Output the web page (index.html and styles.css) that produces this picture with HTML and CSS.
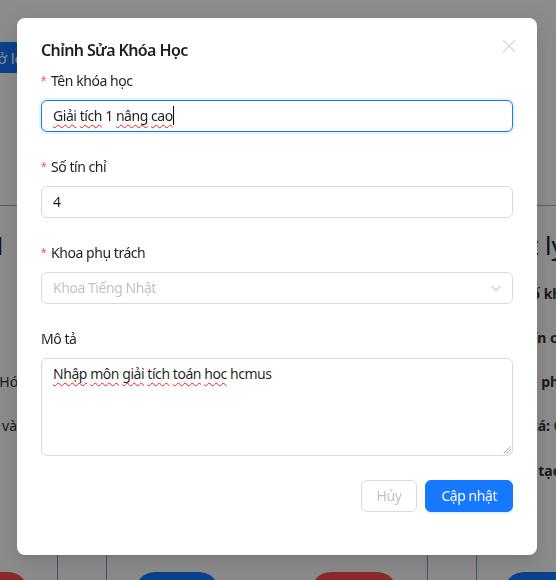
FILE: index.html
```html
<!DOCTYPE html>
<html lang="vi">
<head>
<meta charset="utf-8">
<title>Chỉnh Sửa Khóa Học</title>
<link rel="stylesheet" href="styles.css">
</head>
<body>
<div class="page">
  <div class="topbar"><button class="back-btn">Mở lớp học</button></div>
  <div class="divider"></div>
  <div class="cards">
    <div class="card card-left">
      <div class="card-title t-left">Giải tích 1</div>
      <div class="row r-hide">Mã khóa: GT001</div>
      <div class="row r-hide">Tín chỉ: 4</div>
      <div class="row r-hoa">Khoa: Khoa Hóa</div>
      <div class="row r-va">Cơ sở lý thuyết và</div>
      <div class="row r-hide">Ngày tạo: 01/09</div>
    </div>
    <div class="card card-right">
      <div class="card-title t-right">Vật lý đại cương</div>
      <div class="row b r1">Mã số khóa: VL101</div>
      <div class="row b r2">Tín chỉ: 3</div>
      <div class="row b r3">Khoa phụ trách: Vật lý</div>
      <div class="row r4"><b>Mô tá:</b> <span class="serif">Cơ học</span></div>
      <div class="row b r5">Ngày tạo: 02/09</div>
    </div>
  </div>
  <div class="actions">
    <div class="cell c1"><span class="pill red p1"></span></div>
    <div class="cell c2"></div>
    <div class="cell c3"><span class="pill blue p2"></span><span class="pill red p3"></span></div>
    <div class="cell c4"></div>
    <div class="cell c5"><span class="pill blue p4"></span></div>
  </div>
</div>

<div class="mask"></div>

<div class="modal" role="dialog">
  <button class="close" aria-label="Close">
    <svg width="14" height="14" viewBox="0 0 14 14"><path d="M1 1 L13 13 M13 1 L1 13" stroke="currentColor" stroke-width="1.3" fill="none"/></svg>
  </button>
  <div class="modal-title">Chỉnh Sửa Khóa Học</div>
  <form class="form">
    <div class="item">
      <label class="label"><span class="req">*</span>Tên khóa học</label>
      <div class="input focused"><span class="sp">Giải</span> <span class="sp">tích</span> 1 <span class="sp">nâng</span> <span class="sp">cao</span><span class="caret"></span></div>
    </div>
    <div class="item">
      <label class="label"><span class="req">*</span>Số tín chỉ</label>
      <div class="input">4</div>
    </div>
    <div class="item">
      <label class="label"><span class="req">*</span>Khoa phụ trách</label>
      <div class="input select"><span class="muted">Khoa Tiếng Nhật</span>
        <svg class="arrow" width="10" height="7" viewBox="0 0 10 7"><path d="M0.6 0.8 L5 5.4 L9.4 0.8" stroke="currentColor" stroke-width="1.1" fill="none"/></svg>
      </div>
    </div>
    <div class="item">
      <label class="label">Mô tả</label>
      <div class="input textarea"><span class="sp">Nhập</span> <span class="sp">môn</span> <span class="sp">giải</span> <span class="sp">tích</span> <span class="sp">toán</span> <span class="sp">hoc</span> hcmus
        <svg class="grip" width="9" height="9" viewBox="0 0 9 9"><path d="M8.5 1.5 L1.5 8.5 M8.5 4.5 L4.5 8.5 M8.5 7 L7 8.5" stroke="#6b6b6b" stroke-width="0.9" stroke-dasharray="1 0.6" fill="none"/></svg>
      </div>
    </div>
    <div class="item footer">
      <button type="button" class="btn btn-disabled">Hủy</button>
      <button type="button" class="btn btn-primary">Cập nhật</button>
    </div>
  </form>
</div>
</body>
</html>
```

FILE: styles.css
```css
* { box-sizing: border-box; }
html, body { margin: 0; padding: 0; }
body {
  width: 556px;
  height: 580px;
  overflow: hidden;
  background: #fff;
  font-family: "Noto Sans", "Segoe UI", sans-serif;
  position: relative;
}

/* ---------- background page ---------- */
.page { height: 580px; display: flex; flex-direction: column; overflow: hidden; }
.topbar { flex: none; padding-top: 42px; height: 73px; display: flex; }
.back-btn {
  margin-left: -31px;
  height: 31px;
  border: 0;
  border-radius: 6px;
  background: #1677ff;
  color: #fff;
  font: 15px "Noto Sans", sans-serif;
  padding: 0 15px;
  white-space: nowrap;
}
.divider { flex: none; margin-top: 132px; border-top: 1px solid #7fb4c8; }
.cards { flex: none; height: 349px; display: flex; justify-content: space-between; }
.card { display: flex; flex-direction: column; white-space: nowrap; }
.card-left { width: 300px; margin-left: -260px; align-items: flex-end; }
.card-right { width: 260px; margin-right: -204px; align-items: flex-start; }
.card-title {
  margin-top: 23px;
  font-size: 25px;
  line-height: 32px;
  font-weight: 400;
  color: #14233c;
}
.row { font-size: 14px; line-height: 22px; color: #333; margin-top: 22px; }
.card-left .row:first-of-type, .card-right .row:first-of-type { margin-top: 20px; }
.row.b { font-weight: 700; }
.serif { font-family: "Liberation Serif", serif; }
.t-left { margin-right: 35px; font-weight: 700; }
.r-hide { margin-right: 80px; }
.r-hoa { margin-right: 14px; }
.r-va { margin-right: 23px; }
.t-right { margin-left: 1px; }
.r1 { margin-left: -1px; }
.r2 { margin-left: 25px; }
.r3 { margin-left: 2px; }
.r4 { margin-left: 6px; }
.r5 { margin-left: -2px; }

.actions {
  flex: none;
  height: 25px;
  display: grid;
  grid-template-columns: 57px 50px 320px 50px 1fr;
}
.cell { display: flex; padding-top: 17px; }
.c2, .c4 { border-left: 1px solid #5aa8c4; border-right: 1px solid #5aa8c4; }
.pill { display: block; height: 40px; border-radius: 20px; flex: none; }
.red { background: #ff4d4f; }
.blue { background: #1677ff; }
.p1 { width: 80px; margin-left: -52px; }
.p2 { width: 84px; margin-left: 28px; }
.p3 { width: 86px; margin-left: 92px; }
.p4 { width: 90px; margin-left: 27px; }

/* ---------- mask + modal ---------- */
.mask { position: fixed; inset: 0; background: rgba(0, 0, 0, 0.45); }
.modal {
  position: absolute;
  top: 18px;
  left: 17px;
  width: 520px;
  padding: 20px 24px 19px;
  background: #fff;
  border-radius: 8px;
  box-shadow: 0 6px 16px 0 rgba(0,0,0,0.08), 0 3px 6px -4px rgba(0,0,0,0.12), 0 9px 28px 8px rgba(0,0,0,0.05);
  color: rgba(0, 0, 0, 0.88);
  font-size: 14px;
  letter-spacing: -0.45px;
}
.close {
  position: absolute;
  top: 17px;
  right: 17px;
  width: 22px;
  height: 22px;
  padding: 0;
  border: 0;
  background: transparent;
  color: rgba(0, 0, 0, 0.15);
  display: flex;
  align-items: center;
  justify-content: center;
}
.modal-title {
  font-size: 16px;
  line-height: 24px;
  font-weight: 600;
  margin-bottom: 8px;
  letter-spacing: -0.6px;
}
.form { display: flex; flex-direction: column; }
.item { margin-bottom: 24px; display: flex; flex-direction: column; }
.label {
  line-height: 22px;
  padding-bottom: 8px;
  font-size: 14px;
  color: rgba(0, 0, 0, 0.88);
}
.req {
  color: #ff4d4f;
  font-family: "Liberation Sans", sans-serif;
  font-size: 14px;
  margin-right: 5px;
}
.input {
  display: block;
  height: 32px;
  border: 1px solid #d9d9d9;
  border-radius: 6px;
  padding: 4px 11px;
  line-height: 22px;
  font-size: 14px;
  color: rgba(0, 0, 0, 0.88);
  white-space: pre;
  background: #fff;
}
.focused {
  border-color: #1677ff;
  box-shadow: 0 0 0 2px rgba(5, 145, 255, 0.1);
}
.sp {
  text-decoration: underline wavy #ff1a1a;
  text-decoration-thickness: 1px;
  text-underline-offset: 3px;
  text-decoration-skip-ink: none;
}
.caret { display: inline-block; width: 1px; height: 19px; background: #000; vertical-align: -4px; }
.select { display: flex; align-items: center; justify-content: space-between; }
.muted { color: rgba(0, 0, 0, 0.25); }
.arrow { color: rgba(0, 0, 0, 0.22); }
.textarea {
  height: 98px;
  position: relative;
  white-space: normal;
}
.grip { position: absolute; right: 1px; bottom: 1px; }
.footer { flex-direction: row; justify-content: flex-end; gap: 8px; margin-bottom: 24px; }
.btn {
  height: 32px;
  padding: 4px 15px;
  border-radius: 6px;
  font: 14px "Noto Sans", sans-serif;
  letter-spacing: -0.45px;
  line-height: 22px;
}
.btn-disabled {
  border: 1px solid #d9d9d9;
  background: #fff;
  color: rgba(0, 0, 0, 0.25);
}
.btn-primary {
  border: 1px solid #1677ff;
  background: #1677ff;
  color: #fff;
  box-shadow: 0 2px 0 rgba(5, 145, 255, 0.1);
}
```
